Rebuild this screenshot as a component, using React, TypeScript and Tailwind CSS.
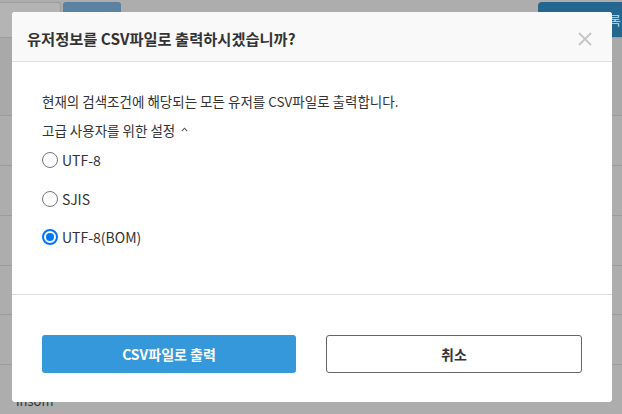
import React from "react";

function Radio({ checked, label }: { checked?: boolean; label: string }) {
  return (
    <label className="flex items-center h-[20px] gap-[4px]">
      {checked ? (
        <span className="w-[16px] h-[16px] rounded-full border-2 border-[#0075ff] flex items-center justify-center bg-white">
          <span className="w-[8px] h-[8px] rounded-full bg-[#0075ff]" />
        </span>
      ) : (
        <span className="w-[16px] h-[16px] rounded-full border border-[#767676] bg-white" />
      )}
      <span className="text-[14px] text-[#333]">{label}</span>
    </label>
  );
}

export default function App() {
  const font = { fontFamily: "'Noto Sans CJK KR', 'Noto Sans', sans-serif" };
  return (
    <div className="relative w-[622px] h-[414px] overflow-hidden bg-[#adadad]" style={font}>
      {/* background page (dimmed) */}
      <div className="flex flex-col">
        <div className="flex h-[38px] pt-[2px] border-b border-[#9c9c9c]">
          <div className="w-[61px] bg-[#b4b4b4] border-t border-r border-[#9c9c9c] rounded-tr-[3px]" />
          <div className="ml-[2px] w-[58px] bg-[#5b82a3] rounded-t-[3px]" />
          <div className="flex-1" />
          <div className="w-[84px] bg-[#23668f] rounded-tl-[4px] flex items-center justify-end pr-[1px] text-[13px] text-[#c9d9e6]">등록</div>
        </div>
        <div className="h-[78px] bg-[#a9a9a9] border-b border-[#9c9c9c]" />
        <div className="h-[50px] border-b border-[#9c9c9c]" />
        <div className="h-[50px] border-b border-[#9c9c9c]" />
        <div className="h-[50px] border-b border-[#9c9c9c]" />
        <div className="h-[49px] border-b border-[#9c9c9c]" />
        <div className="h-[50px] border-b border-[#9c9c9c]" />
        <div className="h-[48px] pl-[16px] pt-[26px] text-[13px] text-[#333]">insom</div>
      </div>

      {/* modal */}
      <div className="absolute left-[12px] top-[12px] w-[600px] h-[390px] bg-white rounded-[3px] overflow-hidden flex flex-col">
        <div className="h-[50px] bg-[#f9f9f9] border-b border-[#dddddd] flex items-center justify-between pl-[15px] pr-[20px] pt-[4px]">
          <span className="text-[15.3px] font-bold text-[#333]">유저정보를 CSV파일로 출력하시겠습니까?</span>
          <svg width="14" height="14" viewBox="0 0 14 14" className="mt-[1px]">
            <path d="M1 1 L13 13 M13 1 L1 13" stroke="#c6c6c6" strokeWidth="1.8" fill="none" />
          </svg>
        </div>
        <div className="h-[232px] px-[30px] pt-[29px] flex flex-col">
          <p className="h-[20px] leading-[20px] text-[13.5px] text-[#333]">현재의 검색조건에 해당되는 모든 유저를 CSV파일로 출력합니다.</p>
          <p className="mt-[9px] h-[20px] leading-[20px] text-[13.5px] text-[#333] flex items-center gap-[6px]">
            고급 사용자를 위한 설정
            <svg width="7" height="5" viewBox="0 0 7 5" className="mt-[-2px]">
              <path d="M0.8 4.2 L3.5 1.2 L6.2 4.2" stroke="#555" strokeWidth="1.1" fill="none" />
            </svg>
          </p>
          <div className="mt-[10px]">
            <Radio label="UTF-8" />
          </div>
          <div className="mt-[19px]">
            <Radio label="SJIS" />
          </div>
          <div className="mt-[18px]">
            <Radio label="UTF-8(BOM)" checked />
          </div>
        </div>
        <div className="border-t border-[#dddddd] px-[30px] pt-[40px] pb-[29px] flex gap-[30px]">
          <button className="flex-1 h-[38px] rounded-[3px] bg-[#3498db] text-white text-[14px] font-bold">CSV파일로 출력</button>
          <button className="flex-1 h-[38px] rounded-[3px] bg-white border border-[#666] text-[#333] text-[14px] font-bold">취소</button>
        </div>
      </div>
    </div>
  );
}
